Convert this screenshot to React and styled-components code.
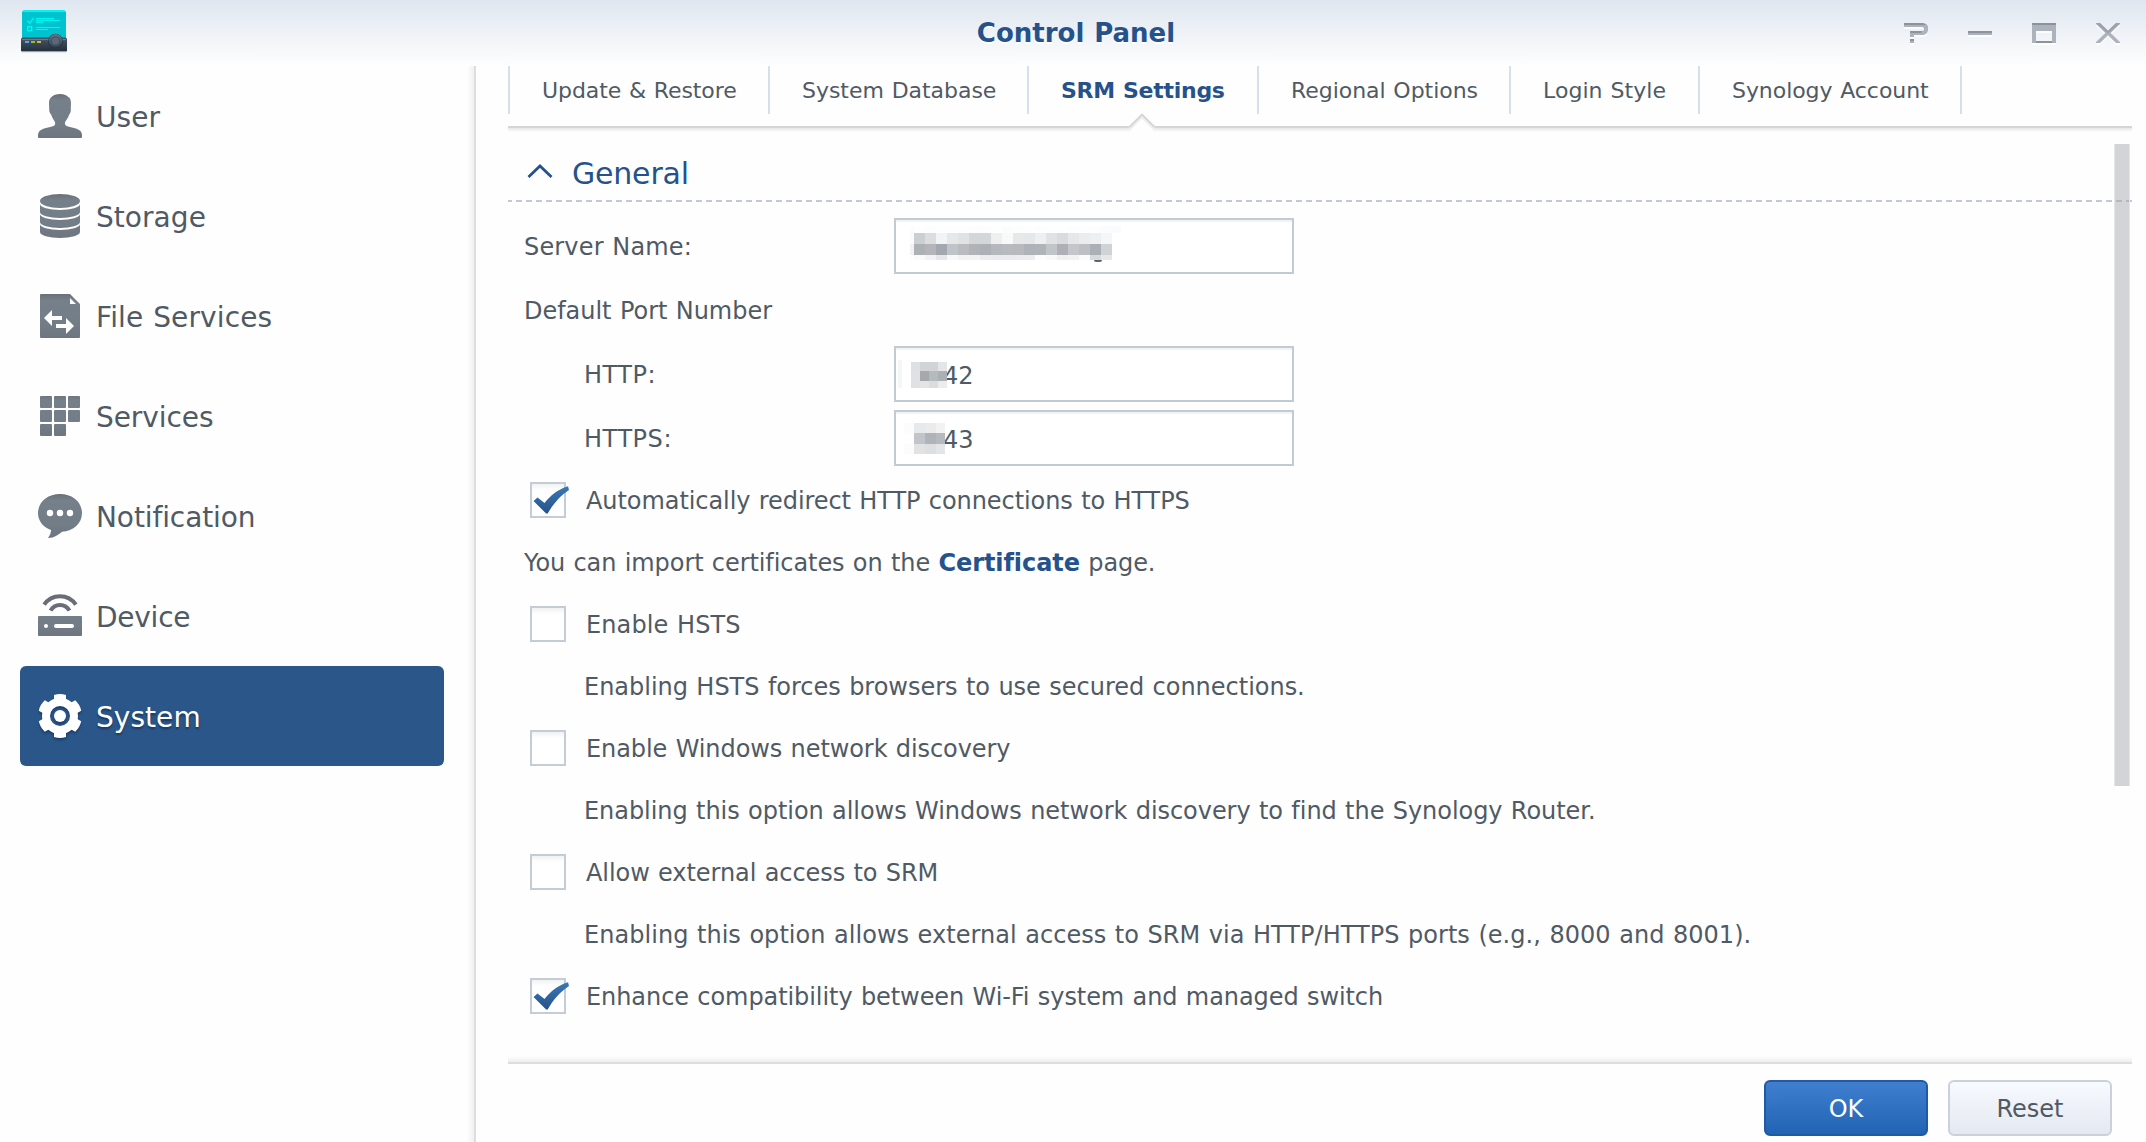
import React, { useState } from 'react';
import styled, { createGlobalStyle, css } from 'styled-components';

const GlobalStyle = createGlobalStyle`
  *, *::before, *::after { box-sizing: border-box; }
  html, body { margin: 0; padding: 0; }
  body {
    background: #fefefe;
    color: #505a64;
    font-family: Verdana, "DejaVu Sans", sans-serif;
    font-size: 24px;
    word-spacing: 0.034em;
    overflow: hidden;
  }
  button, input { font: inherit; color: inherit; word-spacing: inherit; }
`;

const Window = styled.div`
  display: flex;
  flex-direction: column;
  width: 100%;
  height: 1142px;
  overflow: hidden;
`;

/* ---------- title bar ---------- */

const TitleBar = styled.header`
  display: grid;
  grid-template-columns: 1fr auto 1fr;
  align-items: center;
  flex: none;
  height: 66px;
  padding: 0 24px 0 18px;
  background: linear-gradient(#dfe6f0, #fefefe);

  > svg { margin-bottom: 2px; }
`;

const Title = styled.h1`
  margin: 0;
  padding-left: 12px;
  color: #26528c;
  font-size: 26px;
  font-weight: bold;
  line-height: 64px;
  text-shadow: 0 2px 0 rgba(255, 255, 255, 0.8);
`;

const WindowTools = styled.div`
  display: flex;
  justify-content: flex-end;
  gap: 36px;
`;

const ToolButton = styled.button`
  display: flex;
  justify-content: center;
  width: 28px;
  height: 28px;
  padding: 0;
  border: 0;
  background: none;
`;

/* ---------- body ---------- */

const Body = styled.div`
  display: flex;
  flex: 1;
  min-height: 0;
`;

const Sidebar = styled.nav`
  flex: none;
  width: 476px;
  padding: 0 30px 0 20px;
  border-right: 2px solid #dedede;
  background: linear-gradient(to left, #f0f0f0, #fefefe 7px);
`;

const NavItem = styled.a`
  display: flex;
  align-items: center;
  gap: 12px;
  width: 424px;
  height: 100px;
  padding-left: 16px;
  border-radius: 6px;
  font-size: 28px;
  line-height: 36px;
  letter-spacing: ${(p) => p.$track || 0}px;
  ${(p) =>
    p.$active &&
    css`
      background: #2b568a;
      color: #fff;
      text-shadow: 0 2px 2px rgba(0, 20, 50, 0.45);
      svg { filter: drop-shadow(0 2px 1px rgba(0, 20, 50, 0.4)); }
    `}
`;

const NavLabel = styled.span`
  padding-top: 3px;
`;

const Main = styled.main`
  display: flex;
  flex: 1;
  flex-direction: column;
  min-width: 0;
  padding: 0 14px 0 32px;
`;

/* ---------- tabs ---------- */

const TabStrip = styled.div`
  display: flex;
  flex: none;
  height: 60px;
  padding-bottom: 12px;
`;

const Tab = styled.div`
  position: relative;
  flex: none;
  width: ${(p) => p.$width}px;
  padding-left: 32px;
  border-left: 2px solid #d6e0ec;
  font-size: 22px;
  line-height: 49px;
  white-space: nowrap;
  letter-spacing: ${(p) => p.$track || 0}px;
  ${(p) => p.$last && css`border-right: 2px solid #d6e0ec;`}
  ${(p) =>
    p.$active &&
    css`
      color: #26528c;
      font-weight: bold;
    `}
`;

const TabNotch = styled.svg`
  position: absolute;
  left: 99px;
  top: 46px;
`;

const TabRule = styled.div`
  flex: none;
  height: 6px;
  border-top: 2px solid #d5d5d5;
  background: linear-gradient(#e6e6e6, #fefefe);
`;

/* ---------- content ---------- */

const Content = styled.section`
  position: relative;
  flex: 1;
  min-height: 0;
`;

const SectionHeader = styled.header`
  display: flex;
  align-items: center;
  gap: 19px;
  height: 68px;
  padding: 0 0 0 19px;
  color: #26528c;
  font-size: 30px;
  line-height: 68px;
  letter-spacing: -0.199px;

  span { padding-top: 16px; }
  svg { margin-top: 10px; }
`;

const DashedRule = styled.div`
  height: 2px;
  background: repeating-linear-gradient(to right, #c0cad7 0 6px, transparent 6px 10px) -2px 0;
`;

const Scrollbar = styled.div`
  position: absolute;
  top: 12px;
  right: 2px;
  width: 16px;
  height: 642px;
  border: solid #e4e5e6;
  border-width: 0 1px;
  background: rgba(160, 162, 168, 0.45);
`;

const Fields = styled.div`
  display: grid;
  gap: 8px;
  margin-top: 16px;
`;

const Field = styled.div`
  display: flex;
  height: 56px;
  padding-left: ${(p) => (p.$indent ? 76 : 16)}px;
`;

const FieldLabel = styled.label`
  width: ${(p) => (p.$indent ? 310 : 370)}px;
  padding-top: 1px;
  line-height: 56px;
  letter-spacing: ${(p) => p.$track || 0}px;
`;

const InputBox = styled.div`
  position: relative;
  width: 400px;
  border: 2px solid #c2cbd5;
  background: #fff;
  box-shadow: inset 0 2px 0 #eff3f5;
`;

const InputValue = styled.span`
  display: block;
  padding: 1px 0 0 47px;
  line-height: 54px;
`;

const MosaicGrid = styled.div`
  position: absolute;
  left: ${(p) => p.$left}px;
  top: ${(p) => p.$top}px;
  display: grid;
  grid-template-columns: ${(p) => p.$cols};
  grid-template-rows: ${(p) => p.$rows};
`;

const MosaicCell = styled.i`
  background: ${(p) => p.$tone};
`;

const Descender = styled.i`
  position: absolute;
  left: 198px;
  top: 40px;
  width: 8px;
  height: 2px;
  border-radius: 0 0 4px 4px;
  background: #5c6671;
`;

const FaintBar = styled.i`
  position: absolute;
  left: 2px;
  top: 12px;
  width: 4px;
  height: 28px;
  background: #f5f6f7;
`;

const Options = styled.div`
  display: grid;
  gap: 10px;
  margin-top: 8px;
`;

const OptionRow = styled.label`
  display: flex;
  align-items: center;
  gap: 20px;
  height: 52px;
  padding-left: 22px;
`;

const OptionText = styled.span`
  padding-top: 1px;
  line-height: 52px;
  white-space: nowrap;
  letter-spacing: ${(p) => p.$track || 0}px;
`;

const Box = styled.span`
  flex: none;
  width: 36px;
  height: 36px;
  border: 2px solid #c3ccd7;
  background: linear-gradient(#f1f1f1, #fff 6px);

  svg { display: block; overflow: visible; }
`;

const Note = styled.p`
  height: 52px;
  margin: 0;
  padding: 1px 0 0 ${(p) => (p.$indent ? 76 : 16)}px;
  line-height: 52px;
  white-space: nowrap;
  letter-spacing: ${(p) => p.$track || 0}px;
`;

const PageLink = styled.a`
  color: #26528c;
  font-weight: bold;
`;

/* ---------- footer ---------- */

const Footer = styled.footer`
  flex: none;
  height: 86px;
`;

const FooterRule = styled.div`
  height: 8px;
  border-bottom: 2px solid #dddddd;
  background: linear-gradient(#fefefe, #efefef);
`;

const Actions = styled.div`
  display: flex;
  justify-content: flex-end;
  gap: 20px;
  padding: 16px 20px 0 0;
`;

const Button = styled.button`
  width: 164px;
  height: 56px;
  padding: 3px 0 0;
  border: 2px solid #c8d1dc;
  border-radius: 6px;
  background: linear-gradient(#f7faff, #e4e9f0);
  line-height: 49px;
  ${(p) =>
    p.$primary &&
    css`
      border-color: #1f5aa3;
      background: linear-gradient(#407fcf, #2263b3);
      color: #fff;
    `}
`;

/* ---------- drawings ---------- */

const AppIcon = () => (
  <svg width="52" height="50" viewBox="0 0 52 50">
    <defs>
      <linearGradient id="baseFill" x1="0" y1="0" x2="0" y2="1">
        <stop offset="0" stopColor="#465565" />
        <stop offset="1" stopColor="#222e3c" />
      </linearGradient>
      <linearGradient id="knobFill" x1="0" y1="0" x2="0" y2="1">
        <stop offset="0" stopColor="#69798c" />
        <stop offset="1" stopColor="#33404f" />
      </linearGradient>
    </defs>
    <path d="M4 33V5l2-2h40l2 2v28z" fill="#00c3d0" />
    <path d="M4 5l2-2h40l2 2z" fill="#00f6f2" />
    <rect x="4" y="30" width="44" height="2" fill="#0096a2" />
    <rect x="3" y="31" width="46" height="13.5" rx="1" fill="url(#baseFill)" />
    <rect x="4" y="32" width="44" height="1.2" fill="#6c7b89" />
    <rect x="3.5" y="44.4" width="45" height="0.8" fill="#aab0b8" />
    <path d="M9.5 13.5l2.2 2.6 4-5.2" fill="none" stroke="#00f6f2" strokeWidth="1.3" />
    <rect x="9.7" y="19.7" width="4" height="4" fill="none" stroke="#00f6f2" strokeWidth="1.3" />
    <path d="M18 11.6h18M18 13.5h24M18 15.4h7M18 20.5h24M18 22.5h12" stroke="#00f6f2" strokeWidth="1.1" />
    <rect x="7" y="34" width="4" height="2" fill="#4fa9ee" />
    <rect x="13" y="34" width="4" height="2" fill="#8cc22d" />
    <rect x="19" y="34" width="4" height="2" fill="#dcb32d" />
    <circle cx="37.5" cy="34.2" r="7.4" fill="#27323f" />
    <circle cx="37.5" cy="33.8" r="6.8" fill="url(#knobFill)" />
    <circle cx="37.5" cy="33.8" r="4.6" fill="#45515f" />
    <circle cx="37.5" cy="33.8" r="3.6" fill="#5a6879" />
  </svg>
);

const TOOL_SHAPES = {
  help: (
    <>
      <path d="M2 4H20C24 4 26 6 26 8.500V11C26 14 23 16 20 16H12V18H8V12H20C21.500 12 22 11 22 10C22 9 21.500 8 20 8H2Z" />
      <rect x="8" y="20" width="4" height="4" />
    </>
  ),
  minimize: <rect x="2" y="12" width="24" height="4" />,
  maximize: <path fillRule="evenodd" clipRule="evenodd" d="M2 4H26V24H2ZM6 12V22H22V12Z" />,
  close: <path d="M2 4H6L14 11.800 22 4H26V5L16.600 14 26 23V24H22L14 16.200 6 24H2V23L11.400 14 2 5Z" />,
};

const TOOL_HIGHLIGHTS = {
  help: 'M2 4H21l3 2H2ZM8 12H20l-1 2H8ZM8 20h4v2H8Z',
  minimize: 'M2 12H26V14H2Z',
  maximize: 'M2 4H26V6H2ZM6 22H22V24H6Z',
  close: 'M2 4H6L14 11.800 22 4H26L14 14.500Z',
};

const ToolIcon = ({ name }) => (
  <svg width="28" height="28" viewBox="0 0 28 28">
    <g transform="translate(0 2)" fill="#fff" opacity="0.8">{TOOL_SHAPES[name]}</g>
    <g fill="#adb3bd">{TOOL_SHAPES[name]}</g>
    <path d={TOOL_HIGHLIGHTS[name]} fill="#8d929b" opacity={name === 'close' ? 0.55 : 1} />
  </svg>
);

const NAV_SHAPES = {
  user: (
    <path d="M24 2C17 2 12.800 6 13 11C13 13.500 13.300 15 13.200 17C13 19 14 22 15.300 22.800C16 26 19 29.500 19.200 31C19.300 33.200 18 34 16 34.500L8 36.500C4 37.800 2 40 2 43V45Q2 46 3 46H45Q46 46 46 45V43C46 40 44 37.800 40 36.500L32 34.500C30 34 28.800 33 28.900 31C29 29.500 32.500 26 33 22.800C34.300 22 35 19 34.800 17C34.800 15 35 13 35 11C35 8 34 5.500 32.500 5.200C31 3.300 28.500 2 24 2Z" />
  ),
  storage: (
    <>
      <ellipse cx="24" cy="9" rx="20" ry="7" />
      <path d="M4 12A20 6 0 0 0 44 12V20A20 6 0 0 1 4 20Z" />
      <path d="M4 22A20 6 0 0 0 44 22V30A20 6 0 0 1 4 30Z" />
      <path d="M4 32A20 6 0 0 0 44 32V40A20 6 0 0 1 4 40Z" />
    </>
  ),
  file: (
    <path
      fillRule="evenodd"
      d="M5 2H34L44 12V45Q44 46 43 46H5Q4 46 4 45V3Q4 2 5 2ZM34 6V12H40ZM8 26L16 18V24H26V28H16V34ZM38 34L30 42V36H20V32H30V26Z"
    />
  ),
  services: (
    <>
      {[[4, 4], [18, 4], [32, 4], [4, 18], [18, 18], [32, 18], [4, 32], [18, 32]].map(([x, y]) => (
        <rect key={`${x}-${y}`} x={x} y={y} width="12" height="12" rx="1" />
      ))}
    </>
  ),
  notification: (
    <path
      fillRule="evenodd"
      d="M24 2C36.500 2 46 10.200 46 21C46 31.500 37.500 38.800 26 39.800C22 43 18 46.200 12 46C14 43 15 41 15 38C7 35 2 29 2 21C2 10.200 11.500 2 24 2ZM10.800 21a3.200 3.200 0 1 0 6.400 0a3.200 3.200 0 1 0-6.400 0ZM20.800 21a3.200 3.200 0 1 0 6.400 0a3.200 3.200 0 1 0-6.400 0ZM30.800 21a3.200 3.200 0 1 0 6.400 0a3.200 3.200 0 1 0-6.400 0Z"
    />
  ),
  device: (
    <>
      <path
        fillRule="evenodd"
        d="M3 24H45Q46 24 46 25V43Q46 44 45 44H3Q2 44 2 43V25Q2 24 3 24ZM8 34a2 2 0 1 0 4 0a2 2 0 1 0-4 0ZM20 32a2 2 0 0 0 0 4H36a2 2 0 0 0 0-4Z"
      />
      <path d="M8.200 12.700A19 19 0 0 1 39.800 12.700M14.600 18.700A10.500 10.500 0 0 1 33.400 18.700" fill="none" stroke="#6a6d77" strokeWidth="4" />
    </>
  ),
  system: (
    <>
      <path
        fillRule="evenodd"
        d="M24 6a18 18 0 1 0 0 36a18 18 0 1 0 0-36ZM24 14a10 10 0 1 1 0 20a10 10 0 1 1 0-20Z"
      />
      {[0, 60, 120, 180, 240, 300].map((angle) => (
        <path key={angle} d="M18 9V3Q24 1 30 3V9Z" transform={`rotate(${angle} 24 24)`} />
      ))}
      <circle cx="24" cy="24" r="6" />
    </>
  ),
};

const NavIcon = ({ name, active }) => (
  <svg width="48" height="48" viewBox="0 0 48 48">
    <defs>
      <linearGradient id={`tone-${name}`} gradientUnits="userSpaceOnUse" x1="0" y1="2" x2="0" y2="46">
        <stop offset="0" stopColor="#6b6f79" />
        <stop offset="0.14" stopColor="#75808a" />
        <stop offset="0.7" stopColor="#727d87" />
        <stop offset="1" stopColor="#6e757f" />
      </linearGradient>
    </defs>
    <g fill={active ? '#fff' : `url(#tone-${name})`}>{NAV_SHAPES[name]}</g>
  </svg>
);

const CheckMark = () => (
  <svg width="32" height="32" viewBox="0 0 32 32">
    <defs>
      <linearGradient id="checkFill" x1="0" y1="0" x2="0" y2="1">
        <stop offset="0" stopColor="#3a78b8" />
        <stop offset="1" stopColor="#255389" />
      </linearGradient>
    </defs>
    <path d="M2 17L6 13.500L13 19C19 11.500 26 5.500 36.500 2.300L37.500 6C29 11.500 21.500 20 16.200 29.500H14.600Z" transform="translate(-0.500 0)" fill="url(#checkFill)" />
  </svg>
);

const Chevron = () => (
  <svg width="26" height="18" viewBox="0 0 26 18">
    <path d="M1.500 15L13 4L24.500 15" fill="none" stroke="#26528c" strokeWidth="2.800" />
  </svg>
);

/* ---------- data ---------- */

const NAV = [
  { icon: 'user', label: 'User', track: 0.1 },
  { icon: 'storage', label: 'Storage', track: 0.05 },
  { icon: 'file', label: 'File Services', track: 0.12 },
  { icon: 'services', label: 'Services', track: -0.07 },
  { icon: 'notification', label: 'Notification', track: -0.1 },
  { icon: 'device', label: 'Device', track: -0.25 },
  { icon: 'system', label: 'System', track: 0.05 },
];

const TABS = [
  { label: 'Update & Restore', width: 260, track: -0.08 },
  { label: 'System Database', width: 259, track: -0.03 },
  { label: 'SRM Settings', width: 230, track: -0.276 },
  { label: 'Regional Options', width: 252, track: -0.04 },
  { label: 'Login Style', width: 189, track: 0.05 },
  { label: 'Synology Account', width: 264, track: -0.059 },
];

const NAME_MOSAIC = {
  left: 14,
  top: 6,
  cols: '4px repeat(18, 11px) 9px',
  rows: '7px 11px 11px 5px',
  tones: [
    '#fcfcfd', '#fefefe', '#fcfdfd', '#fefefe', '#fefefe', '#fefefe', '#fcfdfd', '#fdfdfd', '#fdfefe', '#fbfdfd', '#fdfdfe', '#fefefe', '#fdfdfe', '#fdfefe', '#fdfefe', '#fcfdfe', '#fefefe', '#fdfdfe', '#fcfcfe', '#fafbfd',
    '#fbfbfc', '#cccfd1', '#dcddde', '#f2f3f5', '#e6e7e9', '#e0e2e3', '#d4d7d9', '#d4d7d9', '#efefef', '#f8faf9', '#e7e8ea', '#e6e7e8', '#eeeff1', '#e0e2e4', '#dadbde', '#e6e7e9', '#eaecee', '#eeeff0', '#f5f6f8', 'transparent',
    '#f2f2f4', '#adb0b5', '#b3b5ba', '#a2a7b0', '#c0c3c7', '#b8bcc1', '#b0b4b9', '#abb1b6', '#b5b9be', '#b8bac0', '#b7b9bf', '#afb2b8', '#afb4b9', '#c1c4c9', '#afb0b7', '#c4c7ca', '#bcc0c5', '#abb0b6', '#d0d3d6', 'transparent',
    '#fdfdfd', '#fafafb', '#f2f2f4', '#e6e7ea', '#f8f8f9', '#f1f2f3', '#f3f3f4', '#ececee', '#ebebed', '#ebebed', '#ececee', '#ededef', '#fcfcfc', '#f8f8f8', '#f0f0f1', '#f2f2f3', '#fbfbfb', '#d7d9dc', '#e6e7e9', 'transparent',
  ],
};

const HTTP_MOSAIC = {
  left: 15,
  top: 14,
  cols: 'repeat(4, 9px)',
  rows: '9px 10px 7px',
  tones: [
    '#dfe0e4', '#d2d3d7', '#d2d3d7', '#e3e5e6',
    '#dfe2e4', '#a3a9ad', '#b5babf', '#abb0b4',
    '#dfe1e3', '#e2e4e5', '#dadcde', '#ebeded',
  ],
};

const HTTPS_MOSAIC = {
  left: 8,
  top: 11,
  cols: '10px 11px 11px 9px',
  rows: '10px 11px 10px',
  tones: [
    '#fcfcfd', '#e8e9eb', '#e9ebec', '#f3f2f3',
    '#fefefe', '#c1c5c9', '#aeb4b8', '#b6babf',
    '#fcfcfd', '#e0e2e4', '#dddfe1', '#e3e5e7',
  ],
};

const Mosaic = ({ pattern }) => (
  <MosaicGrid $left={pattern.left} $top={pattern.top} $cols={pattern.cols} $rows={pattern.rows}>
    {pattern.tones.map((tone, i) => (
      <MosaicCell key={i} $tone={tone} />
    ))}
  </MosaicGrid>
);

const Option = ({ children, track, initial = false }) => {
  const [checked, setChecked] = useState(initial);
  return (
    <OptionRow onClick={() => setChecked(!checked)}>
      <Box>{checked && <CheckMark />}</Box>
      <OptionText $track={track}>{children}</OptionText>
    </OptionRow>
  );
};

export default function App() {
  return (
    <>
      <GlobalStyle />
      <Window>
        <TitleBar>
          <AppIcon />
          <Title>Control Panel</Title>
          <WindowTools>
            {['help', 'minimize', 'maximize', 'close'].map((name) => (
              <ToolButton key={name} aria-label={name}>
                <ToolIcon name={name} />
              </ToolButton>
            ))}
          </WindowTools>
        </TitleBar>

        <Body>
          <Sidebar>
            {NAV.map((item) => {
              const active = item.icon === 'system';
              return (
                <NavItem key={item.icon} $active={active} $track={item.track}>
                  <NavIcon name={item.icon} active={active} />
                  <NavLabel>{item.label}</NavLabel>
                </NavItem>
              );
            })}
          </Sidebar>

          <Main>
            <TabStrip>
              {TABS.map((tab, i) => {
                const active = tab.label === 'SRM Settings';
                return (
                  <Tab key={tab.label} $width={tab.width} $track={tab.track} $active={active} $last={i === TABS.length - 1}>
                    {tab.label}
                    {active && (
                      <TabNotch width="30" height="20" viewBox="0 0 30 20">
                        <path d="M2 13L14 1L26 13V20H2Z" fill="#fefefe" />
                        <path d="M1 17.500L14 4.500L27 17.500" fill="none" stroke="#eeeeee" strokeWidth="3" />
                        <path d="M1.500 15L14 2.500L26.500 15" fill="none" stroke="#d5d5d5" strokeWidth="1.800" />
                      </TabNotch>
                    )}
                  </Tab>
                );
              })}
            </TabStrip>
            <TabRule />

            <Content>
              <SectionHeader>
                <Chevron />
                <span>General</span>
              </SectionHeader>
              <DashedRule />

              <Fields>
                <Field>
                  <FieldLabel $track={0.16}>Server Name:</FieldLabel>
                  <InputBox>
                    <Mosaic pattern={NAME_MOSAIC} />
                    <Descender />
                  </InputBox>
                </Field>
                <Field>
                  <FieldLabel $track={-0.03}>Default Port Number</FieldLabel>
                </Field>
                <Field $indent>
                  <FieldLabel $indent $track={0.5}>HTTP:</FieldLabel>
                  <InputBox>
                    <FaintBar />
                    <InputValue>42</InputValue>
                    <Mosaic pattern={HTTP_MOSAIC} />
                  </InputBox>
                </Field>
                <Field $indent>
                  <FieldLabel $indent $track={0.55}>HTTPS:</FieldLabel>
                  <InputBox>
                    <InputValue>43</InputValue>
                    <Mosaic pattern={HTTPS_MOSAIC} />
                  </InputBox>
                </Field>
              </Fields>

              <Options>
                <Option initial track={-0.071}>Automatically redirect HTTP connections to HTTPS</Option>
                <Note $track={-0.08}>
                  You can import certificates on the <PageLink>Certificate</PageLink> page.
                </Note>
                <Option track={0.12}>Enable HSTS</Option>
                <Note $indent $track={-0.019}>Enabling HSTS forces browsers to use secured connections.</Note>
                <Option track={-0.08}>Enable Windows network discovery</Option>
                <Note $indent $track={-0.05}>
                  Enabling this option allows Windows network discovery to find the Synology Router.
                </Note>
                <Option track={-0.07}>Allow external access to SRM</Option>
                <Note $indent $track={0.043}>
                  Enabling this option allows external access to SRM via HTTP/HTTPS ports (e.g., 8000 and 8001).
                </Note>
                <Option initial track={-0.072}>Enhance compatibility between Wi-Fi system and managed switch</Option>
              </Options>
              <Scrollbar />
            </Content>

            <Footer>
              <FooterRule />
              <Actions>
                <Button $primary>OK</Button>
                <Button>Reset</Button>
              </Actions>
            </Footer>
          </Main>
        </Body>
      </Window>
    </>
  );
}
